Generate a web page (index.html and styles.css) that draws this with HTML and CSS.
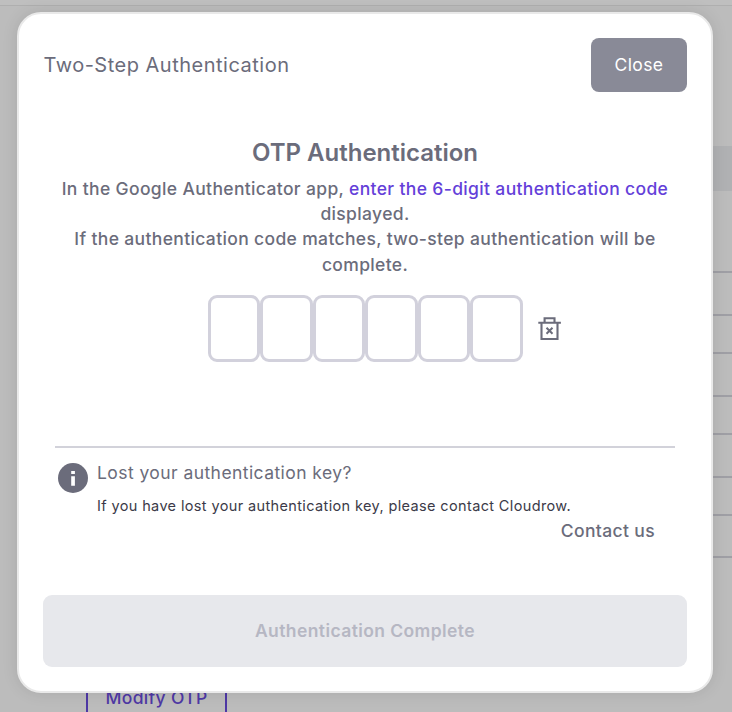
FILE: index.html
```html
<!DOCTYPE html>
<html lang="en">
<head>
<meta charset="utf-8">
<title>Two-Step Authentication</title>
<link rel="stylesheet" href="styles.css">
</head>
<body>
<div class="page">
  <div class="topbar"></div>
  <div class="band"></div>
  <div class="rows">
    <div class="row row-first"></div>
    <div class="row row-tall"></div>
    <div class="row"></div>
    <div class="row row-tall"></div>
    <div class="row"></div>
    <div class="row row-tall"></div>
    <div class="row"></div>
    <div class="row row-last"></div>
  </div>
  <button class="modify">Modify OTP</button>
</div>
<div class="modal" role="dialog">
  <header class="header">
    <h1 class="title">Two-Step Authentication</h1>
    <button class="close">Close</button>
  </header>
  <section class="otp">
    <h2 class="heading">OTP Authentication</h2>
    <p class="desc">In the Google Authenticator app, <span class="accent">enter the 6-digit authentication code</span><br>displayed.<br>If the authentication code matches, two-step authentication will be<br>complete.</p>
    <div class="code">
      <div class="digits">
        <span class="digit"></span><span class="digit"></span><span class="digit"></span><span class="digit"></span><span class="digit"></span><span class="digit"></span>
      </div>
      <svg class="trash" viewBox="0 0 24 26" fill="none" stroke="currentColor" stroke-width="2">
        <path d="M.3 6.8h22.6M6.6 6.8V2.3h9.9v4.5M3.5 7v16h16V7" stroke-width="2.1"/>
        <path d="M8.5 11.7l6 6M14.5 11.7l-6 6"/>
      </svg>
    </div>
  </section>
  <section class="help">
    <svg class="info" viewBox="0 0 30 30">
      <circle cx="15" cy="15" r="15" fill="#6b6c7b"/>
      <path d="M13.2 8h3.7v3.1h-3.7zM13.2 13.3h3.7v9.4h-3.7z" fill="#fff"/>
    </svg>
    <div class="help-body">
      <h3 class="help-title">Lost your authentication key?</h3>
      <p class="help-text">If you have lost your authentication key, please contact Cloudrow.</p>
      <a class="contact">Contact us</a>
    </div>
  </section>
  <button class="complete" disabled>Authentication Complete</button>
</div>
</body>
</html>
```

FILE: styles.css
```css
* { box-sizing: border-box; margin: 0; }
body {
  width: 732px;
  height: 712px;
  overflow: hidden;
  position: relative;
  background: #bcbcbc;
  font-family: Inter, "Liberation Sans", sans-serif;
  color: #6b6c7b;
}
button { font: inherit; border: 0; padding: 0; }
.topbar { height: 6px; background: #bfbfbf; border-bottom: 1px solid #afafaf; }
.band { margin: 140px 0 0 86px; height: 45px; background: #b0b1b3; }
.rows { margin-left: 86px; }
.row { height: 38px; border-bottom: 2px solid #9f9fa5; }
.row-first { height: 82px; }
.row-tall { height: 43px; }
.row-last { height: 42px; }
.modify {
  display: block;
  margin: 113px 0 0 86px;
  width: 141px;
  height: 54px;
  padding-bottom: 1px;
  border: 2px solid #4e38a5;
  border-radius: 8px;
  background: transparent;
  color: #4e38a5;
  font-size: 17.5px;
  font-weight: 500;
  letter-spacing: 0.33px;
}
.modal {
  position: absolute;
  left: 17px;
  top: 12px;
  width: 696px;
  height: 681px;
  padding: 24px;
  border: 2px solid #e9e9e9;
  border-radius: 24px;
  background: #fff;
  box-shadow: 0 0 16px rgba(0, 0, 0, .1);
  display: flex;
  flex-direction: column;
}
.header { display: flex; justify-content: space-between; align-items: center; height: 54px; }
.title { font-size: 20px; font-weight: 400; letter-spacing: 0.5px; padding-left: 0.5px; }
.close {
  width: 96px;
  height: 54px;
  padding-bottom: 1px;
  border-radius: 8px;
  background: #898a97;
  color: #fff;
  font-size: 17.5px;
  letter-spacing: 0.4px;
}
.otp { margin-top: 45px; text-align: center; }
.heading { font-size: 24px; line-height: 32px; font-weight: 600; letter-spacing: 0; }
.desc { font-size: 17.5px; line-height: 25.2px; font-weight: 480; letter-spacing: 0.35px; margin-top: 7px; white-space: nowrap; }
.accent { color: #643fd9; font-weight: 500; }
.code { display: flex; align-items: center; margin: 18.4px 0 0 165px; }
.digits { display: flex; }
.digit { width: 52.45px; height: 67px; border: 3px solid #d2d1dc; border-radius: 9px; }
.trash { width: 24px; height: 26px; margin-left: 15.3px; }
.help {
  display: flex;
  margin: 84px 12px 0;
  padding: 15px 20px 0 3px;
  border-top: 2px solid #d2d2da;
}
.info { width: 30px; height: 30px; flex: none; }
.help-body { flex: 1; margin-left: 9px; white-space: nowrap; }
.help-title { font-size: 17.5px; line-height: 24px; font-weight: 400; letter-spacing: 0.43px; margin-top: -2px; }
.help-text { font-size: 14.5px; line-height: 20px; letter-spacing: 0.37px; color: #3b3a48; margin-top: 11px; }
.contact { display: block; text-align: right; font-size: 17.5px; line-height: 24px; font-weight: 500; letter-spacing: 0.36px; margin-top: 3px; }
.complete {
  margin-top: auto;
  height: 72px;
  padding-bottom: 1px;
  border-radius: 9px;
  background: #e7e8ec;
  color: #b6b7c3;
  font-size: 17.5px;
  font-weight: 600;
  letter-spacing: 0.41px;
}
```
